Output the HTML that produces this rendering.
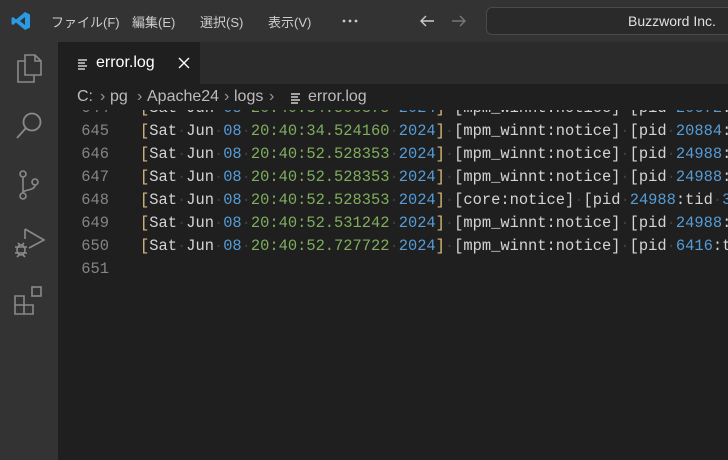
<!DOCTYPE html>
<html><head><meta charset="utf-8"><style>
*{margin:0;padding:0;box-sizing:border-box}
body{width:728px;height:460px;overflow:hidden;background:#1f1f1f;font-family:"Liberation Sans","Noto Sans CJK JP",sans-serif;position:relative}
#title{position:absolute;left:0;top:0;width:728px;height:42px;background:#333333;color:#cccccc;font-size:13px}
#title .m{position:absolute;top:12px;white-space:nowrap}
#search{position:absolute;left:486px;top:7px;width:260px;height:28px;border:1px solid #4a4a4a;border-radius:6px;background:#2a2a2a}
#act{position:absolute;left:0;top:42px;width:58px;height:418px;background:#333333}
#tabs{position:absolute;left:58px;top:42px;width:670px;height:42px;background:#2b2b2b}
#tab{position:absolute;left:0;top:0;width:142px;height:42px;background:#1f1f1f;color:#ffffff;font-size:16px}
#crumb{position:absolute;left:58px;top:84px;width:670px;height:26px;background:#1f1f1f;color:#bbbbbb;font-size:16px;z-index:2}
#crumb span{position:absolute;top:4px;white-space:nowrap}
#ed{position:absolute;left:58px;top:110px;width:670px;height:350px;overflow:hidden;font-family:"Liberation Mono",monospace;font-size:15.4px}
.l{position:absolute;left:0;height:23px;line-height:23px;white-space:pre;width:700px}
.n{position:absolute;left:0;width:51px;text-align:right;color:#858585}
.c{position:absolute;left:82px;color:#d4d4d4}
.y{color:#d7ba7d}.b{color:#569cd6}.g{color:#7fae5c}.d{color:#3f3f3f}
</style></head><body>
<div id="title">
<svg style="position:absolute;left:11px;top:11px" width="20" height="20" viewBox="0 0 20 20"><path d="M14 1 L19 3.5 V16.5 L14 19 L5 11.5 L2 14 L0.5 13 V7 L2 6 L5 8.5 Z M14 6 L9 10 L14 14 Z" fill="#2a9be3" fill-rule="evenodd"/></svg>
<span class="m" style="left:51px">ファイル(F)</span>
<span class="m" style="left:132px">編集(E)</span>
<span class="m" style="left:200px">選択(S)</span>
<span class="m" style="left:268px">表示(V)</span>
<svg style="position:absolute;left:342px;top:19px" width="16" height="4" viewBox="0 0 16 4" fill="#cccccc"><circle cx="2" cy="2" r="1.4"/><circle cx="8" cy="2" r="1.4"/><circle cx="14" cy="2" r="1.4"/></svg>
<svg style="position:absolute;left:418px;top:12px" width="18" height="18" viewBox="0 0 18 18"><path d="M16 9H3M8 4L3 9l5 5" stroke="#cccccc" stroke-width="1.4" fill="none"/></svg>
<svg style="position:absolute;left:450px;top:12px" width="18" height="18" viewBox="0 0 18 18"><path d="M2 9h13M10 4l5 5-5 5" stroke="#777" stroke-width="1.4" fill="none"/></svg>
<div id="search"><span style="position:absolute;left:141px;top:5px;color:#e0e0e0;font-size:14px">Buzzword Inc.</span></div>
</div>
<div id="act">
<svg style="position:absolute;left:14px;top:10px" width="30" height="34" viewBox="0 0 30 34" fill="none" stroke="#8a8a8a" stroke-width="1.6"><path d="M11 3h10l6 6v14H11z M21 3v6h6"/><path d="M11 9H4v21h16v-7"/></svg>
<svg style="position:absolute;left:14px;top:68px" width="30" height="32" viewBox="0 0 30 32" fill="none" stroke="#8a8a8a" stroke-width="1.8"><circle cx="18" cy="12" r="8.5"/><path d="M12 18L3 28"/></svg>
<svg style="position:absolute;left:14px;top:126px" width="30" height="34" viewBox="0 0 30 34" fill="none" stroke="#8a8a8a" stroke-width="1.6"><circle cx="9" cy="6" r="3"/><circle cx="9" cy="28" r="3"/><circle cx="21" cy="14" r="3"/><path d="M9 9v16M21 17c0 6-12 4-12 8"/></svg>
<svg style="position:absolute;left:12px;top:184px" width="34" height="34" viewBox="0 0 34 34" fill="none" stroke="#8a8a8a" stroke-width="1.6"><path d="M13 3l19 11-15 8"/><path d="M13 3v10"/><ellipse cx="9" cy="24" rx="4" ry="5"/><path d="M3 21h12M3 27h12M6 17l2 2M12 17l-2 2M5 31l2-2M13 31l-2-2"/></svg>
<svg style="position:absolute;left:13px;top:242px" width="32" height="32" viewBox="0 0 32 32" fill="none" stroke="#8a8a8a" stroke-width="1.6"><path d="M2 12h9v9H2zM2 21h9v9H2zM11 21h9v9h-9z"/><rect x="19" y="3" width="9" height="9"/></svg>
</div>
<div id="tabs"><div id="tab">
<svg style="position:absolute;left:19px;top:16px" width="12" height="12" viewBox="0 0 12 12" stroke="#cfcfcf" stroke-width="1.5"><path d="M1 2h9M1 5h7M1 8h9M1 11h7"/></svg>
<span style="position:absolute;left:38px;top:12px">error.log</span>
<svg style="position:absolute;left:120px;top:15px" width="12" height="12" viewBox="0 0 12 12" stroke="#ffffff" stroke-width="1.4"><path d="M1 1l10 10M11 1L1 11"/></svg>
</div></div>
<div id="crumb">
<span style="left:19px">C:</span><span style="left:42px;color:#999">›</span>
<span style="left:52px">pg</span><span style="left:79px;color:#999">›</span>
<span style="left:89px">Apache24</span><span style="left:166px;color:#999">›</span>
<span style="left:176px">logs</span><span style="left:211px;color:#999">›</span>
<svg style="position:absolute;left:232px;top:8px" width="12" height="12" viewBox="0 0 12 12" stroke="#cfcfcf" stroke-width="1.5"><path d="M1 2h9M1 5h7M1 8h9M1 11h7"/></svg>
<span style="left:250px">error.log</span>
</div>
<div id="ed">
<div class="l" style="top:-13px"><span class="n">644</span><span class="c"><span class="y">[</span>Sat<span class="d">·</span>Jun<span class="d">·</span><span class="b">08</span><span class="d">·</span><span class="g">20:40:34.500375</span><span class="d">·</span><span class="b">2024</span><span class="y">]</span><span class="d">·</span>[mpm_winnt:notice]<span class="d">·</span>[pid<span class="d">·</span><span class="b">20672</span>:</span></div>
<div class="l" style="top:10px"><span class="n">645</span><span class="c"><span class="y">[</span>Sat<span class="d">·</span>Jun<span class="d">·</span><span class="b">08</span><span class="d">·</span><span class="g">20:40:34.524160</span><span class="d">·</span><span class="b">2024</span><span class="y">]</span><span class="d">·</span>[mpm_winnt:notice]<span class="d">·</span>[pid<span class="d">·</span><span class="b">20884</span>:</span></div>
<div class="l" style="top:33px"><span class="n">646</span><span class="c"><span class="y">[</span>Sat<span class="d">·</span>Jun<span class="d">·</span><span class="b">08</span><span class="d">·</span><span class="g">20:40:52.528353</span><span class="d">·</span><span class="b">2024</span><span class="y">]</span><span class="d">·</span>[mpm_winnt:notice]<span class="d">·</span>[pid<span class="d">·</span><span class="b">24988</span>:</span></div>
<div class="l" style="top:56px"><span class="n">647</span><span class="c"><span class="y">[</span>Sat<span class="d">·</span>Jun<span class="d">·</span><span class="b">08</span><span class="d">·</span><span class="g">20:40:52.528353</span><span class="d">·</span><span class="b">2024</span><span class="y">]</span><span class="d">·</span>[mpm_winnt:notice]<span class="d">·</span>[pid<span class="d">·</span><span class="b">24988</span>:</span></div>
<div class="l" style="top:79px"><span class="n">648</span><span class="c"><span class="y">[</span>Sat<span class="d">·</span>Jun<span class="d">·</span><span class="b">08</span><span class="d">·</span><span class="g">20:40:52.528353</span><span class="d">·</span><span class="b">2024</span><span class="y">]</span><span class="d">·</span>[core:notice]<span class="d">·</span>[pid<span class="d">·</span><span class="b">24988</span>:tid<span class="d">·</span><span class="b">3</span></span></div>
<div class="l" style="top:102px"><span class="n">649</span><span class="c"><span class="y">[</span>Sat<span class="d">·</span>Jun<span class="d">·</span><span class="b">08</span><span class="d">·</span><span class="g">20:40:52.531242</span><span class="d">·</span><span class="b">2024</span><span class="y">]</span><span class="d">·</span>[mpm_winnt:notice]<span class="d">·</span>[pid<span class="d">·</span><span class="b">24988</span>:</span></div>
<div class="l" style="top:125px"><span class="n">650</span><span class="c"><span class="y">[</span>Sat<span class="d">·</span>Jun<span class="d">·</span><span class="b">08</span><span class="d">·</span><span class="g">20:40:52.727722</span><span class="d">·</span><span class="b">2024</span><span class="y">]</span><span class="d">·</span>[mpm_winnt:notice]<span class="d">·</span>[pid<span class="d">·</span><span class="b">6416</span>:tid</span></div>
<div class="l" style="top:148px"><span class="n">651</span></div>
</div>
</body></html>
